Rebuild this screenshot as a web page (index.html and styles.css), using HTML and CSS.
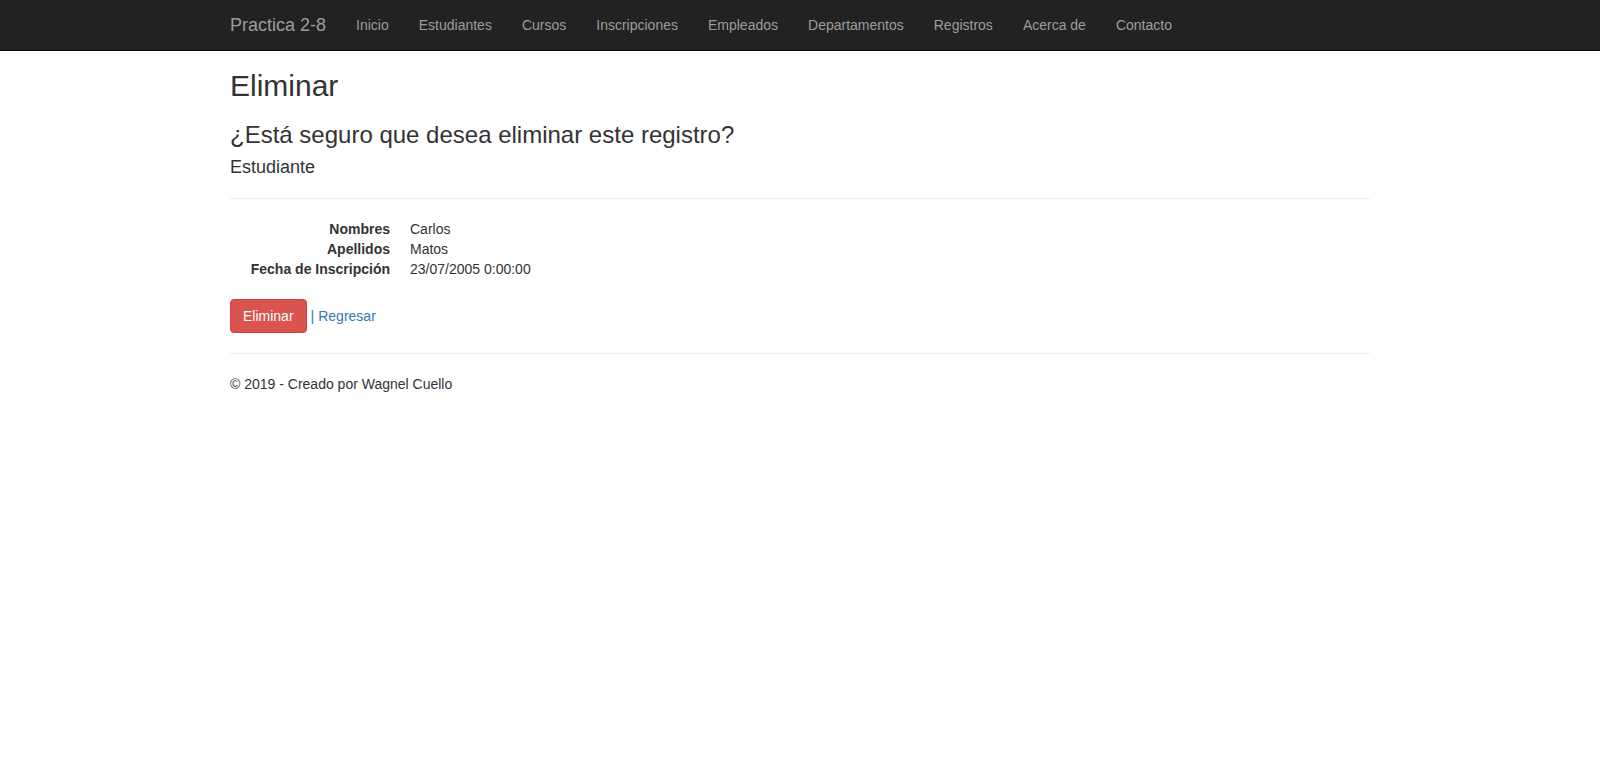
FILE: index.html
```html
<!DOCTYPE html>
<html lang="es">
<head>
<meta charset="utf-8">
<title>Eliminar - Practica 2-8</title>
<link rel="stylesheet" href="styles.css">
</head>
<body>
<nav class="navbar">
  <div class="container navbar-inner">
    <a class="brand" href="#">Practica 2-8</a>
    <ul class="nav">
      <li><a href="#">Inicio</a></li>
      <li><a href="#">Estudiantes</a></li>
      <li><a href="#">Cursos</a></li>
      <li><a href="#">Inscripciones</a></li>
      <li><a href="#">Empleados</a></li>
      <li><a href="#">Departamentos</a></li>
      <li><a href="#">Registros</a></li>
      <li><a href="#">Acerca de</a></li>
      <li><a href="#">Contacto</a></li>
    </ul>
  </div>
</nav>
<div class="container body-content">
  <h2>Eliminar</h2>
  <h3>¿Está seguro que desea eliminar este registro?</h3>
  <div>
    <h4>Estudiante</h4>
    <hr>
    <dl class="dl-horizontal">
      <dt>Nombres</dt><dd>Carlos</dd>
      <dt>Apellidos</dt><dd>Matos</dd>
      <dt>Fecha de Inscripción</dt><dd>23/07/2005 0:00:00</dd>
    </dl>
    <form class="form-actions">
      <button type="button" class="btn-danger">Eliminar</button>
      <span class="sep">|</span>
      <a class="link" href="#">Regresar</a>
    </form>
  </div>
  <hr>
  <footer>
    <p>© 2019 - Creado por Wagnel Cuello</p>
  </footer>
</div>
</body>
</html>
```
FILE: styles.css
```css
* { box-sizing: border-box; }
html, body { margin: 0; }
body {
  font-family: "Liberation Sans", Arial, sans-serif;
  font-size: 14px;
  line-height: 1.42857143;
  color: #333;
  background: #fff;
  padding-top: 50px;
  padding-bottom: 20px;
}
.container {
  width: 1170px;
  margin: 0 auto;
  padding: 0 15px;
}
.navbar {
  position: fixed;
  top: 0; left: 0; right: 0;
  height: 51px;
  background: #222;
  border-bottom: 1px solid #080808;
  z-index: 10;
}
.navbar-inner {
  display: flex;
  align-items: flex-start;
}
.brand {
  font-size: 18px;
  line-height: 20px;
  padding: 15px 15px;
  margin-left: -15px;
  color: #9d9d9d;
  text-decoration: none;
  height: 50px;
}
.nav {
  display: flex;
  list-style: none;
  margin: 0;
  padding: 0;
}
.nav a {
  display: block;
  padding: 15px;
  line-height: 20px;
  color: #9d9d9d;
  text-decoration: none;
}
h2, h3, h4 {
  font-weight: 500;
  line-height: 1.1;
  color: inherit;
}
h2 { font-size: 30px; margin: 19px 0 10px; }
h3 { font-size: 24px; margin: 20px 0 10px; }
h4 { font-size: 18px; margin: 10px 0 10px; }
hr {
  margin: 20px 0;
  border: 0;
  border-top: 1px solid #eee;
  height: 0;
}
.dl-horizontal {
  display: grid;
  grid-template-columns: 160px 1fr;
  column-gap: 20px;
  margin: 0 0 20px;
}
.dl-horizontal dt {
  font-weight: bold;
  text-align: right;
  line-height: 1.42857143;
  white-space: nowrap;
}
.dl-horizontal dd { margin: 0; }
.form-actions {
  margin: 0;
  display: flex;
  align-items: center;
}
.btn-danger {
  font-family: inherit;
  font-size: 14px;
  line-height: 1.42857143;
  padding: 6px 12px;
  color: #fff;
  background: #d9534f;
  border: 1px solid #d43f3a;
  border-radius: 4px;
  cursor: pointer;
}
.sep { color: #337ab7; margin-left: 4px; margin-right: 4px; }
.link { color: #337ab7; text-decoration: none; }
footer p { margin: 0 0 10px; }
```
